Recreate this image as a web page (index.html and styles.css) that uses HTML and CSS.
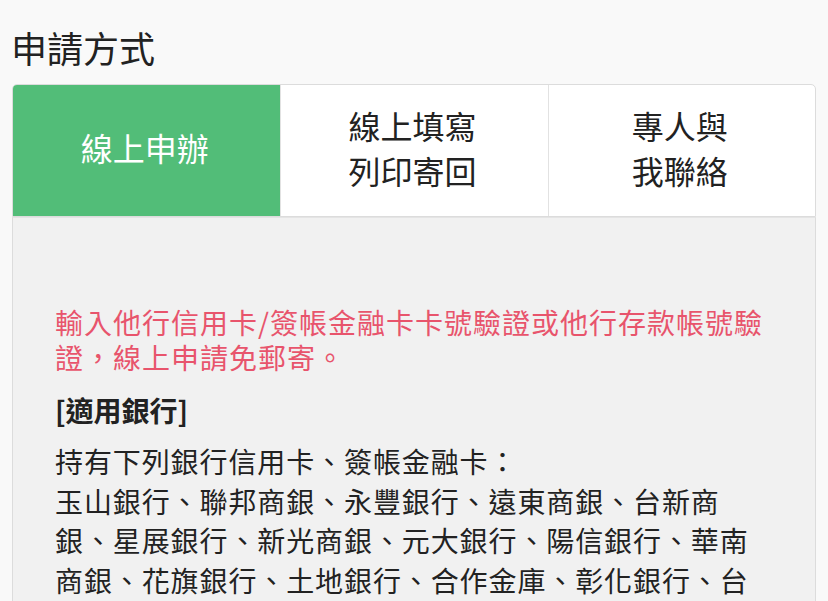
FILE: index.html
```html
<!DOCTYPE html>
<html lang="zh-Hant">
<head>
    <meta charset="UTF-8">
    <meta name="viewport" content="width=device-width, initial-scale=1.0">
    <title>申請方式</title>
    <link rel="stylesheet" href="styles.css">
</head>
<body>
    <h1 class="title">申請方式</h1>

    <div class="tabs">
        <div class="tab active">線上申辦</div>
        <div class="tab">線上填寫<br>列印寄回</div>
        <div class="tab">專人與<br>我聯絡</div>
    </div>

    <div class="panel">
        <p class="notice">輸入他行信用卡/簽帳金融卡卡號驗證或他行存款帳號驗證，線上申請免郵寄。</p>
        <h2 class="sub">[適用銀行]</h2>
        <p class="body-text">持有下列銀行信用卡、簽帳金融卡：<br>玉山銀行、聯邦商銀、永豐銀行、遠東商銀、台新商銀、星展銀行、新光商銀、元大銀行、陽信銀行、華南商銀、花旗銀行、土地銀行、合作金庫、彰化銀行、台灣銀行、第一銀行、兆豐銀行</p>
    </div>
</body>
</html>
```

FILE: styles.css
```css
body {
    font-family: "Noto Sans CJK TC", "Noto Sans", sans-serif;
    background: #f9f9f9;
    margin: 0;
    padding: 0 12px;
    color: #222;
}
.title {
    font-size: 36px;
    font-weight: normal;
    line-height: 47px;
    margin: 0 0 13px -1px;
    padding-top: 24px;
}
.tabs {
    display: grid;
    grid-template-columns: 1fr 1fr 1fr;
    height: 131px;
    background: #fff;
    border: 1px solid #dcdcdc;
    border-radius: 5px 5px 0 0;
    overflow: hidden;
}
.tab {
    display: flex;
    align-items: center;
    justify-content: center;
    text-align: center;
    font-size: 32px;
    line-height: 45px;
    padding: 0 4px 6px 0;
    color: #222;
    border-left: 1px solid #e2e2e2;
}
.tab:first-child {
    border-left: none;
}
.tab.active {
    background: #52bd78;
    color: #fff;
}
.panel {
    background: #f1f1f1;
    border-left: 1px solid #dcdcdc;
    border-right: 1px solid #dcdcdc;
    border-top: 1px solid #e4e4e4;
    padding: 87px 42px 40px 42px;
    min-height: 400px;
}
.notice {
    color: #e8546c;
    font-size: 28px;
    letter-spacing: 1px;
    line-height: 35px;
    margin: 0;
}
.sub {
    font-size: 28px;
    font-weight: bold;
    line-height: 36px;
    margin: 17px 0 0 0;
    color: #222;
}
.body-text {
    font-size: 28px;
    letter-spacing: 0.9px;
    line-height: 39.5px;
    margin: 14px 0 0 0;
    color: #222;
}
```
